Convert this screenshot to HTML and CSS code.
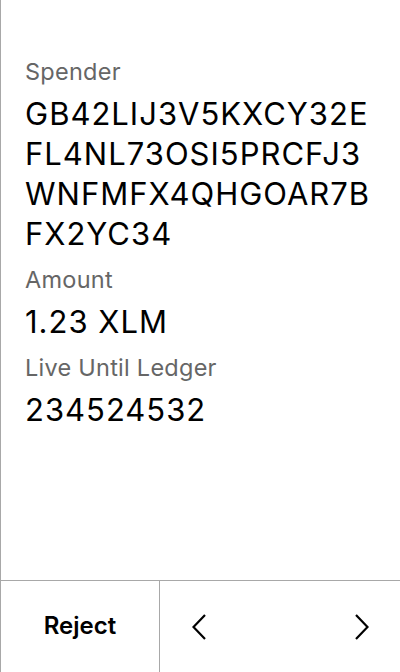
FILE: index.html
```html
<!DOCTYPE html>
<html>
<head>
<meta charset="utf-8">
<link rel="stylesheet" href="styles.css">
</head>
<body>
<div class="screen">
  <main class="content">
    <div class="field">
      <div class="label">Spender</div>
      <div class="value">GB42LIJ3V5KXCY32EFL4NL73OSI5PRCFJ3WNFMFX4QHGOAR7BFX2YC34</div>
    </div>
    <div class="field">
      <div class="label">Amount</div>
      <div class="value">1.23 XLM</div>
    </div>
    <div class="field">
      <div class="label">Live Until Ledger</div>
      <div class="value">234524532</div>
    </div>
  </main>
  <footer class="footer">
    <div class="reject">Reject</div>
    <div class="nav">
      <svg class="chev" width="14" height="26" viewBox="0 0 14 26"><path d="M13 1 L1.5 13 L13 25" fill="none" stroke="#000" stroke-width="2.2"/></svg>
      <svg class="chev" width="14" height="26" viewBox="0 0 14 26"><path d="M1 1 L12.5 13 L1 25" fill="none" stroke="#000" stroke-width="2.2"/></svg>
    </div>
  </footer>
</div>
</body>
</html>
```
FILE: styles.css
```css
* { box-sizing: border-box; }
html, body { margin: 0; padding: 0; background: #fff; }
body { font-family: Inter, "Noto Sans", sans-serif; color: #000; }
.screen {
  width: 400px;
  height: 672px;
  border-left: 1px solid #a8a8a8;
  display: flex;
  flex-direction: column;
}
.content {
  flex: 1;
  padding: 56px 24px 0 24px;
  display: flex;
  flex-direction: column;
  gap: 10px;
}
.label {
  font-size: 23.5px;
  line-height: 32px;
  letter-spacing: 0.25px;
  color: #666;
}
.value {
  font-size: 31px;
  line-height: 40px;
  letter-spacing: 1px;
  word-break: break-all;
  margin-top: 6px;
}
.footer {
  height: 92px;
  border-top: 1px solid #a8a8a8;
  display: flex;
}
.reject {
  width: 159px;
  border-right: 1px solid #a8a8a8;
  display: flex;
  align-items: center;
  justify-content: center;
  font-size: 24px;
  font-weight: 600;
  padding-bottom: 2px;
}
.nav {
  flex: 1;
  display: flex;
  align-items: center;
  justify-content: space-between;
  padding: 0 31px 0 32px;
}
.chev { display: block; }
```
